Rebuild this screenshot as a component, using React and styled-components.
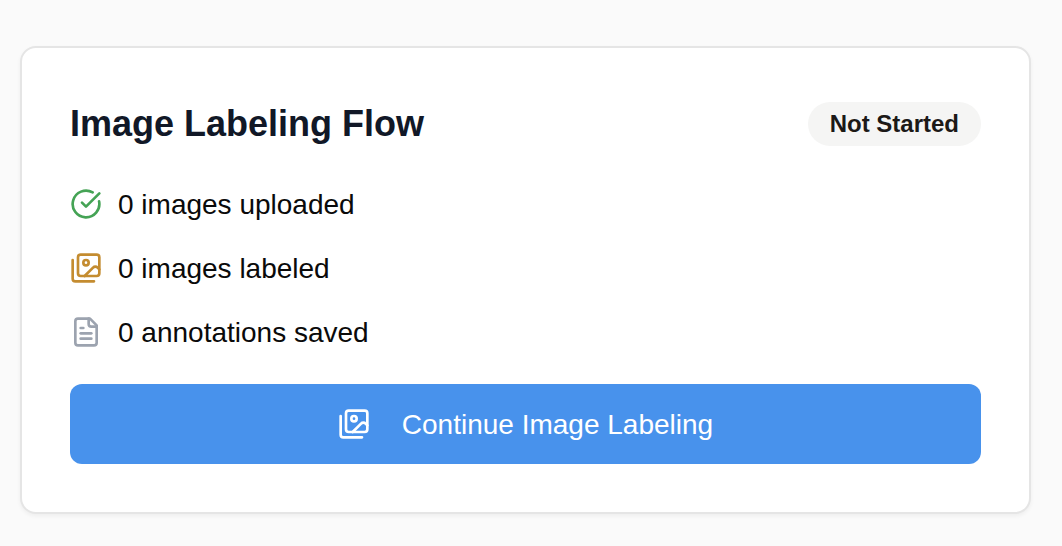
import React from "react";
import styled, { createGlobalStyle } from "styled-components";
import { CircleCheckBig } from "lucide-react";

const Global = createGlobalStyle`
  * { box-sizing: border-box; }
  body {
    margin: 0;
    background: #fafafa;
    color: #0a0a0a;
    font-family: "Liberation Sans", Arial, sans-serif;
    -webkit-font-smoothing: antialiased;
  }
`;

const Page = styled.main`
  padding: 46px 31px 32px 20px;
`;

const Card = styled.section`
  padding: 48px;
  background: #fff;
  border: 2px solid #e5e5e5;
  border-radius: 16px;
  box-shadow: 0 2px 4px rgba(0, 0, 0, 0.05);
`;

const Header = styled.header`
  display: flex;
  align-items: center;
  justify-content: space-between;
  margin-bottom: 32px;
`;

const Title = styled.h2`
  margin: 0;
  font-size: 36px;
  line-height: 56px;
  font-weight: 700;
  color: #111827;
`;

const Badge = styled.span`
  padding: 6px 22px;
  border-radius: 22px;
  background: #f5f5f4;
  color: #1c1917;
  font-size: 24px;
  line-height: 32px;
  font-weight: 700;
`;

const Stats = styled.ul`
  display: flex;
  flex-direction: column;
  gap: 24px;
  margin: 0 0 32px;
  padding: 0;
  list-style: none;
`;

const Stat = styled.li`
  display: flex;
  align-items: center;
  gap: 16px;

  svg { color: ${(p) => p.$tone}; }
`;

const Label = styled.span`
  padding-top: 2px;
  font-size: 28px;
  line-height: 38px;
`;

const Action = styled.button`
  display: flex;
  align-items: center;
  justify-content: center;
  gap: 32px;
  width: 100%;
  padding: 20px 32px;
  border: 0;
  border-radius: 12px;
  background: #4892ec;
  color: #fff;
  font: inherit;
  cursor: pointer;
`;

const LineIcon = styled.svg.attrs({
  viewBox: "0 0 24 24",
  width: 32,
  height: 32,
  fill: "none",
  stroke: "currentColor",
  strokeWidth: 2,
  strokeLinecap: "round",
  strokeLinejoin: "round",
  "aria-hidden": true,
})`
  flex: none;
`;

const CheckIcon = () => <CircleCheckBig size={32} aria-hidden="true" />;

const ImagesIcon = () => (
  <LineIcon>
    <path d="M18 22H4a2 2 0 0 1-2-2V6" />
    <path d="m22 13-1.296-1.296a2.41 2.41 0 0 0-3.408 0L11 18" />
    <circle cx="12" cy="8" r="2" />
    <rect width="16" height="16" x="6" y="2" rx="2" />
  </LineIcon>
);

const DocumentIcon = () => (
  <LineIcon>
    <path d="M15 2H6a2 2 0 0 0-2 2v16a2 2 0 0 0 2 2h12a2 2 0 0 0 2-2V7Z" />
    <path d="M14 2v4a2 2 0 0 0 2 2h4" />
    <path d="M10 9H8" />
    <path d="M16 13H8" />
    <path d="M16 17H8" />
  </LineIcon>
);

const stats = [
  { icon: CheckIcon, tone: "#45a355", text: "0 images uploaded" },
  { icon: ImagesIcon, tone: "#c48c30", text: "0 images labeled" },
  { icon: DocumentIcon, tone: "#9ca3af", text: "0 annotations saved" },
];

export default function App() {
  return (
    <Page>
      <Global />
      <Card>
        <Header>
          <Title>Image Labeling Flow</Title>
          <Badge>Not Started</Badge>
        </Header>
        <Stats>
          {stats.map(({ icon: Icon, tone, text }) => (
            <Stat key={text} $tone={tone}>
              <Icon />
              <Label>{text}</Label>
            </Stat>
          ))}
        </Stats>
        <Action type="button">
          <ImagesIcon />
          <Label>Continue Image Labeling</Label>
        </Action>
      </Card>
    </Page>
  );
}
